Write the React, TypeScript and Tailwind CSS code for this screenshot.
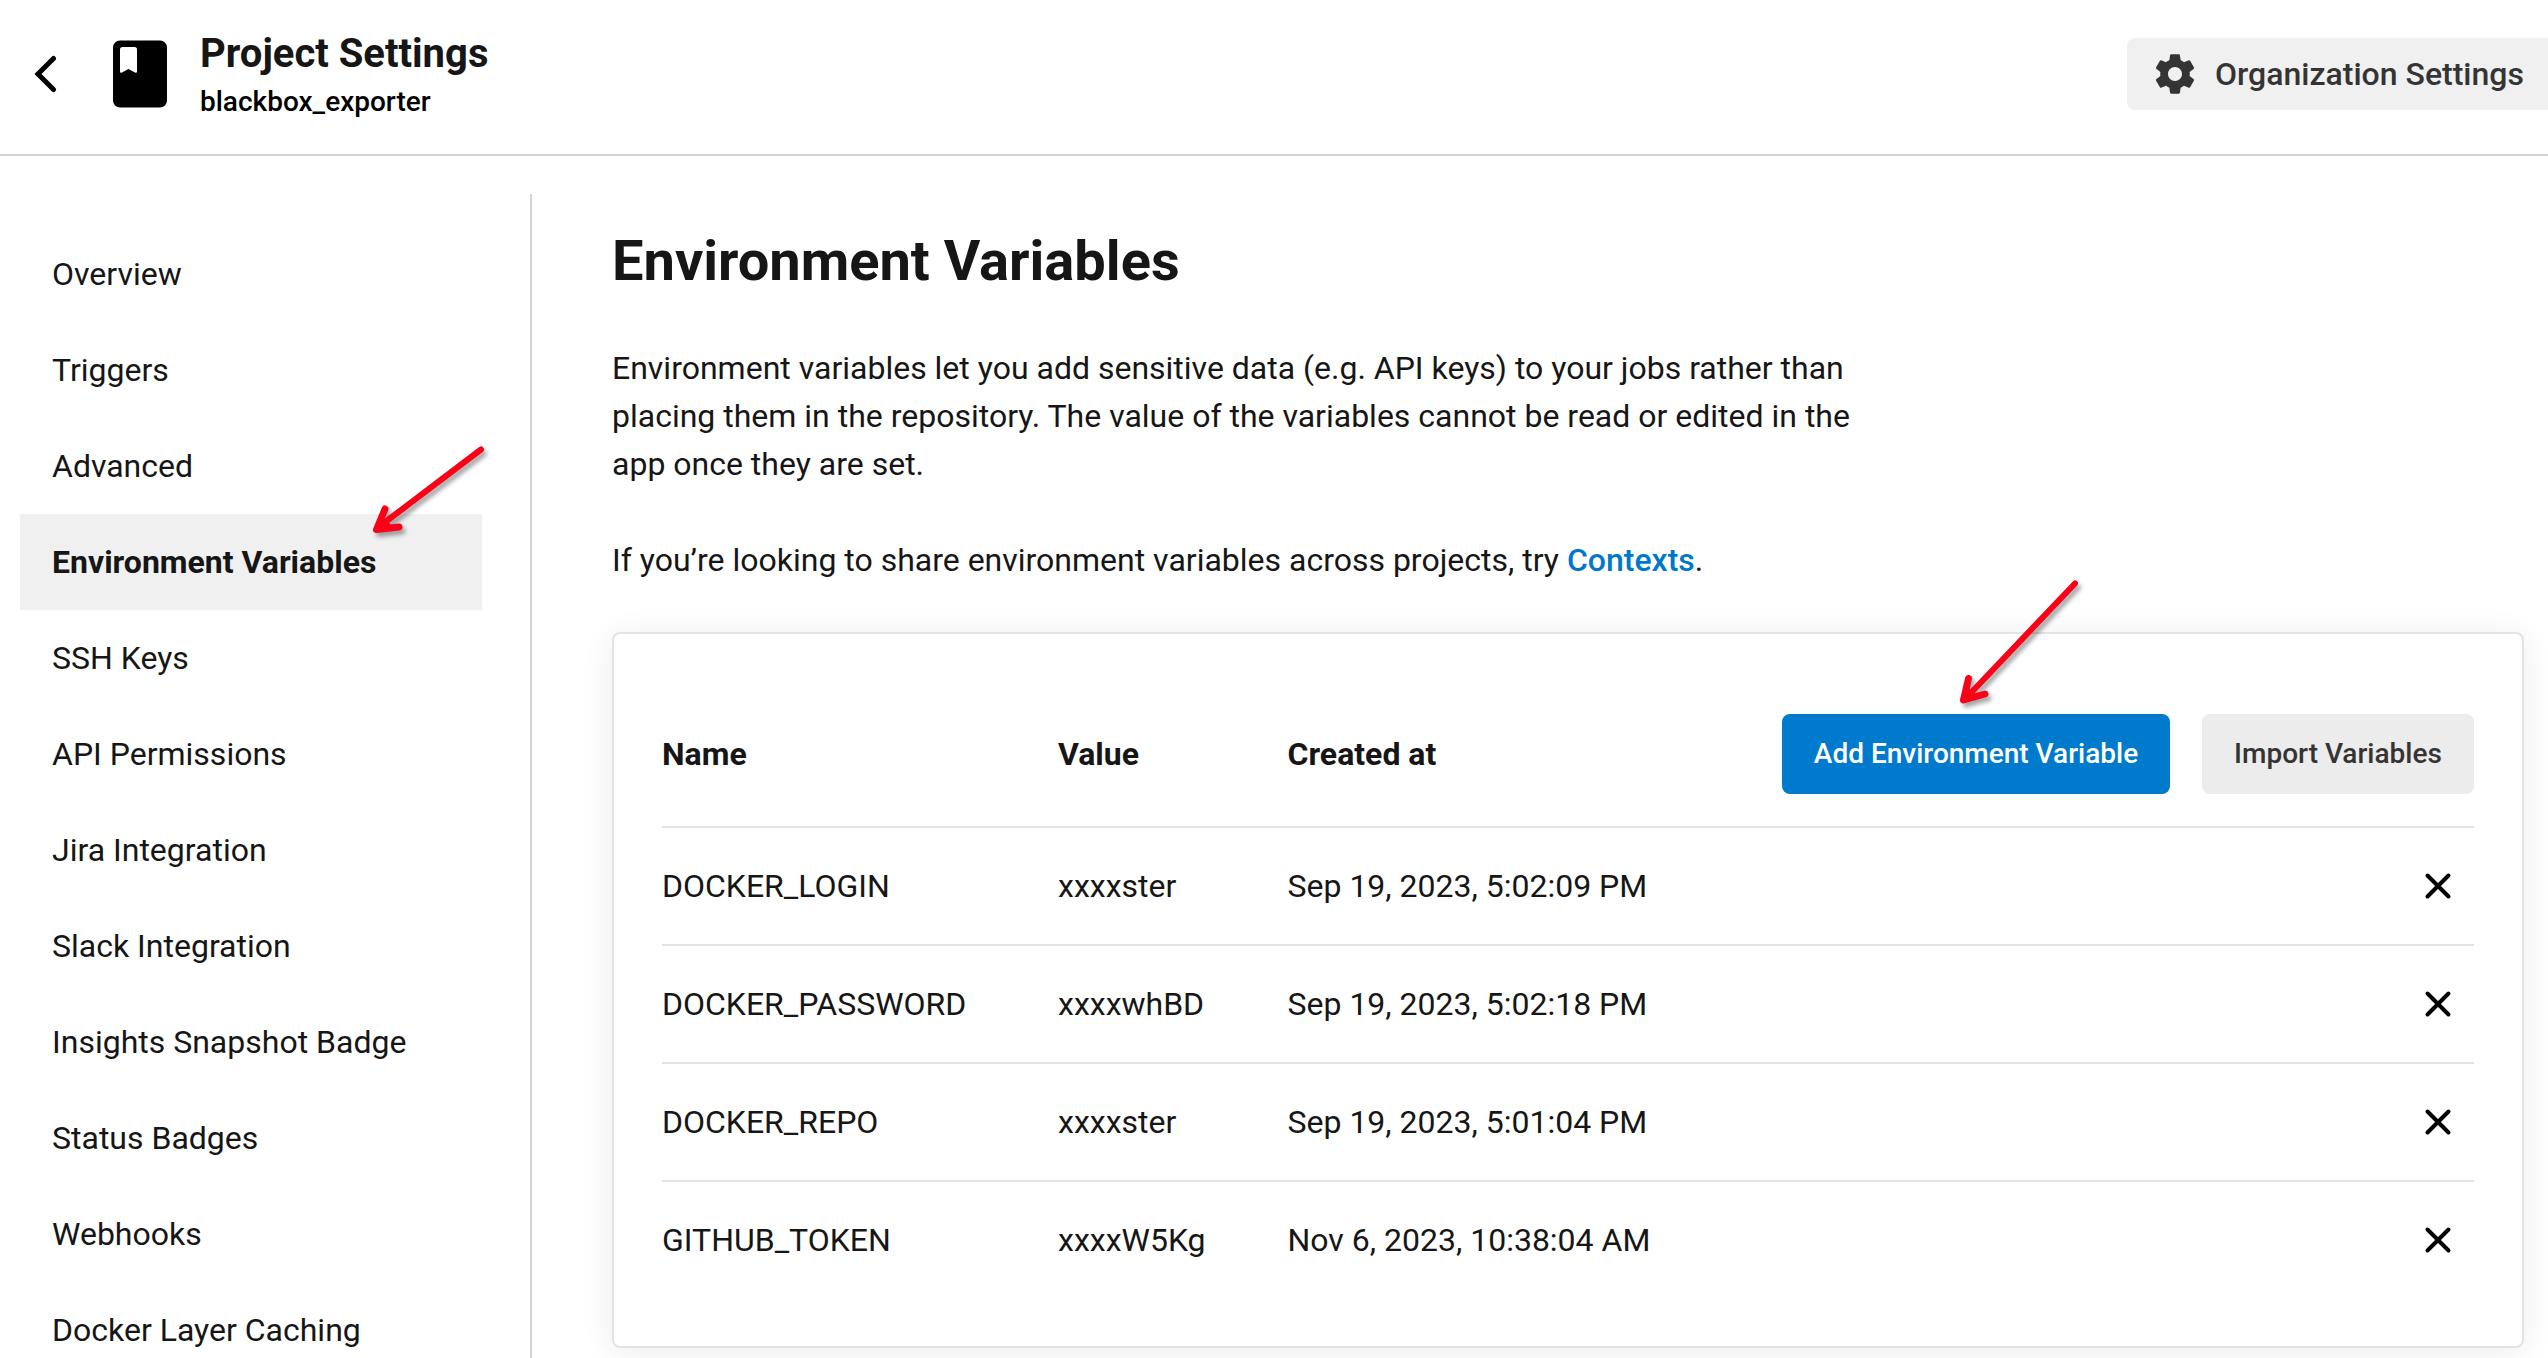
const navItems = [
  "Overview",
  "Triggers",
  "Advanced",
  "Environment Variables",
  "SSH Keys",
  "API Permissions",
  "Jira Integration",
  "Slack Integration",
  "Insights Snapshot Badge",
  "Status Badges",
  "Webhooks",
  "Docker Layer Caching",
];

const variables = [
  { name: "DOCKER_LOGIN", value: "xxxxster", created: "Sep 19, 2023, 5:02:09 PM" },
  { name: "DOCKER_PASSWORD", value: "xxxxwhBD", created: "Sep 19, 2023, 5:02:18 PM" },
  { name: "DOCKER_REPO", value: "xxxxster", created: "Sep 19, 2023, 5:01:04 PM" },
  { name: "GITHUB_TOKEN", value: "xxxxW5Kg", created: "Nov 6, 2023, 10:38:04 AM" },
];

function Header() {
  return (
    <header className="flex h-[156px] w-full shrink-0 items-start border-b-2 border-[#d3d3d3] pl-[34px]">
      <svg className="mt-[55px] h-[38px] w-[24px]" viewBox="0 0 24 38" fill="none" stroke="#000" strokeWidth="5">
        <path d="M19.500 3.500 4 19l15.500 15.500" strokeLinecap="round" />
      </svg>
      <svg className="mt-[40px] ml-[55px] h-[68px] w-[54px]" viewBox="0 0 54 68">
        <path
          fillRule="evenodd"
          d="M7 .5h40a7 7 0 0 1 7 7v53a7 7 0 0 1-7 7H7a7 7 0 0 1-7-7v-53a7 7 0 0 1 7-7ZM9.500 7Q7 7 7 9.500V31.500Q7 33.500 9 32.500L15.500 29l6.500 3.500Q24 33.500 24 31.500V9.500Q24 7 21.500 7Z"
        />
      </svg>
      <div className="mt-[28px] ml-[33px] flex-1">
        <div className="text-[40px] leading-[52px] font-bold">Project Settings</div>
        <div className="mt-[2px] text-[28px] leading-[40px] font-medium text-black">blackbox_exporter</div>
      </div>
      <button className="mt-[38px] flex h-[72px] w-[421px] items-center rounded-l-lg bg-[#f0f0f0] pl-[28px] text-[#343434]">
        <svg className="h-[40px] w-[40px]" viewBox="2.250 2.250 19.500 19.500" fill="currentColor">
          <path d="M19.140 12.940c.04-.3.060-.610.060-.940 0-.320-.020-.640-.070-.940l2.030-1.580a.49.49 0 0 0 .120-.610l-1.920-3.320a.488.488 0 0 0-.590-.220l-2.390.960c-.5-.380-1.030-.7-1.620-.940l-.360-2.540a.484.484 0 0 0-.480-.410h-3.840c-.240 0-.430.170-.470.410l-.360 2.540c-.590.240-1.130.570-1.620.940l-2.390-.960c-.220-.080-.470 0-.590.220L2.740 8.870c-.120.210-.080.470.120.610l2.030 1.580c-.050.3-.090.630-.090.940s.020.640.070.940l-2.030 1.580a.49.49 0 0 0-.120.610l1.920 3.320c.120.220.370.290.590.220l2.390-.960c.5.380 1.030.7 1.620.940l.360 2.540c.050.240.240.410.480.410h3.840c.240 0 .440-.170.470-.410l.360-2.540c.590-.240 1.130-.560 1.620-.940l2.390.960c.220.080.470 0 .590-.220l1.920-3.320c.120-.220.070-.470-.120-.610l-2.010-1.580zM12 15.400c-1.880 0-3.400-1.520-3.400-3.400s1.520-3.400 3.400-3.400 3.400 1.520 3.400 3.400-1.520 3.400-3.400 3.400z" />
        </svg>
        <span className="ml-5 text-[32px] leading-[48px] font-medium whitespace-nowrap">Organization Settings</span>
      </button>
    </header>
  );
}

function Sidebar() {
  return (
    <aside className="mt-[38px] w-[532px] shrink-0 border-r-2 border-[#d3d3d3] pt-[32px] pr-[48px] pl-[20px]">
      <nav>
        {navItems.map((item) => (
          <a
            key={item}
            className={
              item === "Environment Variables"
                ? "relative flex h-[96px] items-center bg-[#f0f0f0] pl-[32px] font-bold"
                : "flex h-[96px] items-center pl-[32px]"
            }
          >
            {item}
            {item === "Environment Variables" && (
              <svg
                className="absolute top-[-84px] left-[330px] h-[120px] w-[150px] drop-shadow-[3px_4px_2px_rgba(0,0,0,0.35)]"
                viewBox="350 430 150 120"
                fill="#fb0016"
                stroke="#fb0016"
                strokeLinecap="round"
                strokeLinejoin="round"
              >
                <path strokeWidth="6" d="M481 449.500 380 526" />
                <path strokeWidth="7" d="M385 509 376.500 529.500 399 527" fill="none" />
                <path strokeWidth="3" d="M376.500 529.500 381 518 389 525Z" />
              </svg>
            )}
          </a>
        ))}
      </nav>
    </aside>
  );
}

function VariablesCard() {
  return (
    <section className="mt-[48px] h-[716px] rounded-lg border-2 border-[#e3e3e3] bg-white px-[48px] pt-[76px] shadow-[0_4px_32px_rgba(0,0,0,0.08)]">
      <div className="flex h-[118px] items-start border-b-2 border-[#e3e3e3] pt-[4px]">
        <div className="mt-[16px] w-[396px] font-bold">Name</div>
        <div className="mt-[16px] w-[229.500px] font-bold">Value</div>
        <div className="mt-[16px] flex-1 font-bold">Created at</div>
        <button className="relative h-[80px] w-[388px] rounded-lg bg-[#007acc] text-[28px] font-medium text-white">
          Add Environment Variable
          <svg
            className="absolute top-[-144px] left-[158px] h-[150px] w-[160px] drop-shadow-[3px_4px_2px_rgba(0,0,0,0.35)]"
            viewBox="1940 570 160 150"
            fill="#fb0016"
            stroke="#fb0016"
            strokeLinecap="round"
            strokeLinejoin="round"
          >
            <path strokeWidth="6" d="M2075 583.500 1967 697" />
            <path strokeWidth="7" d="M1968.500 678.500 1963.500 700 1985 694" fill="none" />
            <path strokeWidth="3" d="M1963.500 700 1966.500 688 1975 696Z" />
          </svg>
        </button>
        <button className="ml-8 h-[80px] w-[272px] rounded-lg bg-[#ececec] text-[28px] font-medium text-[#343434]">
          Import Variables
        </button>
      </div>
      {variables.map((v) => (
        <div key={v.name} className="flex h-[118px] items-center border-b-2 border-[#e3e3e3] last:border-transparent">
          <div className="w-[396px]">{v.name}</div>
          <div className="w-[229.500px]">{v.value}</div>
          <div className="flex-1">{v.created}</div>
          <svg className="mr-[22px] h-[28px] w-[28px]" viewBox="0 0 28 28" stroke="#000" strokeWidth="4" strokeLinecap="round">
            <path d="M3.500 3.500 24.500 24.500M24.500 3.500 3.500 24.500" />
          </svg>
        </div>
      ))}
    </section>
  );
}

export default function App() {
  return (
    <div className="flex h-[1358px] w-[2548px] flex-col overflow-hidden bg-white font-['Roboto',sans-serif] text-[32px] leading-[48px] text-[#161616]">
      <Header />
      <div className="flex min-h-0 flex-1">
        <Sidebar />
        <main className="w-[1992px] pt-[69px] pl-[80px]">
          <h1 className="text-[56px] leading-[72px] font-bold">Environment Variables</h1>
          <p className="mt-[47px] w-[1260px]">
            Environment variables let you add sensitive data (e.g. API keys) to your jobs rather than placing them in the
            repository. The value of the variables cannot be read or edited in the app once they are set.
          </p>
          <p className="mt-[48px]">
            If you’re looking to share environment variables across projects, try{" "}
            <a className="font-medium text-[#0078ca]">Contexts</a>.
          </p>
          <VariablesCard />
        </main>
      </div>
    </div>
  );
}
